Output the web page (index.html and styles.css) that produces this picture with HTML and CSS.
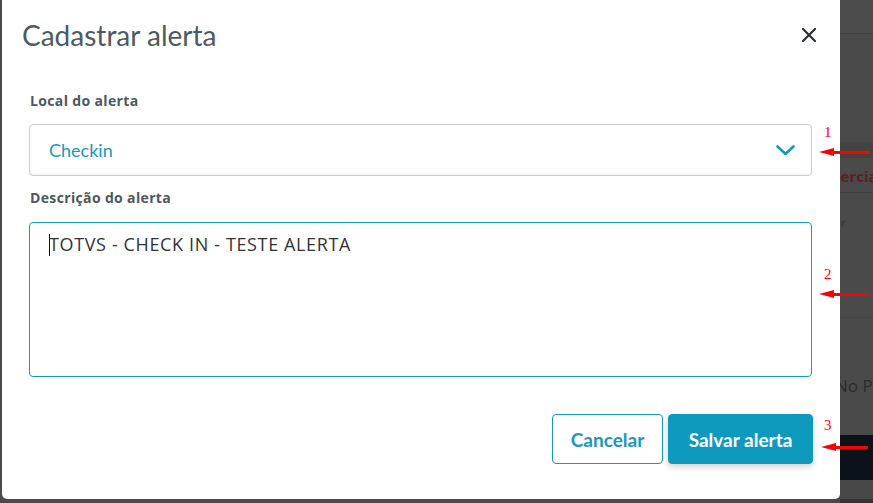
FILE: index.html
```html
<!DOCTYPE html>
<html lang="pt-BR">
<head>
<meta charset="utf-8">
<title>Cadastrar alerta</title>
<link rel="stylesheet" href="styles.css">
</head>
<body>
<div class="page">
  <div class="behind">
    <div class="row r-top"></div>
    <div class="row r-a"></div>
    <div class="row r-band"></div>
    <div class="row r-head"><span class="head-text">Comercial</span></div>
    <div class="row r-b"><span class="small-text">r</span></div>
    <div class="row r-c"><span class="np-text">No Pos</span></div>
    <div class="row r-navy"></div>
    <div class="row r-d"></div>
    <div class="row r-bottom"></div>
  </div>

  <div class="modal">
    <header class="modal-header">
      <h1 class="modal-title">Cadastrar alerta</h1>
      <button class="close-btn" aria-label="Fechar">
        <svg width="14" height="14" viewBox="0 0 14 14"><path d="M1 1L13 13M13 1L1 13" stroke="#2b2f33" stroke-width="2.2" stroke-linecap="round"/></svg>
      </button>
    </header>
    <div class="modal-body">
      <label class="field-label">Local do alerta</label>
      <div class="select">
        <span class="select-value">Checkin</span>
        <svg class="chevron" width="19" height="11" viewBox="0 0 19 11"><path d="M1.5 1.5L9.5 9L17.5 1.5" fill="none" stroke="#1798bd" stroke-width="2.6" stroke-linecap="round" stroke-linejoin="round"/></svg>
      </div>
      <label class="field-label label-desc">Descrição do alerta</label>
      <div class="textarea"><span class="caret"></span>TOTVS - CHECK IN - TESTE ALERTA</div>
    </div>
    <footer class="modal-footer">
      <button class="btn btn-outline">Cancelar</button>
      <button class="btn btn-primary">Salvar alerta</button>
    </footer>
  </div>

  <div class="note note-1"><span class="note-num">1</span><span class="arrow"></span></div>
  <div class="note note-2"><span class="note-num">2</span><span class="arrow"></span></div>
  <div class="note note-3"><span class="note-num">3</span><span class="arrow"></span></div>
</div>
</body>
</html>
```

FILE: styles.css
```css
* { box-sizing: border-box; }
html, body { margin: 0; padding: 0; }
body {
  width: 873px;
  height: 503px;
  overflow: hidden;
  background: #4a4a4a;
  font-family: Lato, "Open Sans", Arial, sans-serif;
}
.page {
  position: relative;
  width: 873px;
  height: 503px;
}

/* page behind the overlay */
.behind {
  display: flex;
  flex-direction: column;
  height: 503px;
  padding-left: 840px;
  background: #4a4a4a;
  overflow: hidden;
}
.row { flex: none; white-space: nowrap; overflow: hidden; }
.r-top { height: 34px; border-bottom: 1px solid #434343; background: #4b4b4b; }
.r-a { height: 108px; background: #4a4a4a; }
.r-band { height: 16px; background: #434343; }
.r-head { height: 35px; border-bottom: 1px solid #3e3e3e; background: #4a4a4a; padding-top: 8px; }
.head-text { display: inline-block; margin-left: -33px; font-family: "Open Sans", sans-serif; font-weight: 700; font-size: 15px; color: #5a1f1f; }
.r-b { height: 125px; border-bottom: 1px solid #434343; padding-top: 18px; }
.small-text { font-size: 12px; color: #3a3a3a; margin-left: 1px; }
.r-c { height: 117px; padding-top: 56px; }
.np-text { font-family: "Open Sans", sans-serif; font-size: 17px; color: #2c2c2c; margin-left: -5px; }
.r-navy { height: 45px; background: #0b1219; }
.r-d { height: 19px; background: #484848; }
.r-bottom { flex: 1; background: #333; }

/* modal */
.modal {
  position: absolute;
  left: 2px;
  top: -6px;
  width: 838px;
  height: 505px;
  background: #fff;
  border-radius: 5px;
  display: flex;
  flex-direction: column;
}
.modal-header {
  display: flex;
  align-items: center;
  justify-content: space-between;
  height: 91px;
  padding: 0 24px 9px 20px;
}
.modal-title {
  margin: 0;
  font-weight: 400;
  font-size: 28px;
  color: #4a5b63;
}
.close-btn {
  background: none;
  border: 0;
  padding: 0;
  width: 14px;
  height: 14px;
  display: flex;
}
.modal-body {
  display: flex;
  flex-direction: column;
  padding: 0 28px 0 27px;
}
.field-label {
  font-family: "Open Sans", sans-serif;
  font-weight: 700;
  font-size: 14px;
  letter-spacing: 0.35px;
  color: #4d585e;
  line-height: 18px;
  margin: 7px 0 0 1px;
}
.select {
  margin-top: 14px;
  height: 52px;
  border: 1px solid #c9cdd0;
  border-radius: 4px;
  box-shadow: inset 0 -1px 3px rgba(0,0,0,0.05);
  display: flex;
  align-items: center;
  justify-content: space-between;
  padding: 0 16px 0 19px;
}
.select-value {
  font-size: 18px;
  color: #1798bd;
}
.chevron { margin-top: 1px; }
.label-desc { margin-top: 13px; }
.textarea {
  margin-top: 15px;
  height: 155px;
  border: 1px solid #1798bd;
  border-radius: 4px;
  padding: 10px 19px;
  font-family: "Open Sans", sans-serif;
  font-size: 18px;
  letter-spacing: 0.63px;
  color: #333;
  line-height: 22px;
}
.caret {
  display: inline-block;
  width: 1px;
  height: 22px;
  background: #111;
  vertical-align: -5px;
  margin-right: -1px;
}
.modal-footer {
  display: flex;
  justify-content: flex-end;
  gap: 5px;
  padding: 37px 27px 0 0;
}
.btn {
  height: 50px;
  border-radius: 4px;
  font-family: Lato, "Open Sans", sans-serif;
  font-weight: 700;
  font-size: 19px;
  padding: 0;
}
.btn-outline {
  width: 111px;
  background: #fff;
  border: 1px solid #1798bd;
  color: #1798bd;
}
.btn-primary {
  width: 145px;
  background: #0e9abe;
  border: 1px solid #0e9abe;
  color: #fff;
  box-shadow: 0 3px 6px rgba(0,0,0,0.18);
}

/* red annotations over the screenshot */
.note {
  position: absolute;
  left: 818px;
  width: 52px;
  height: 34px;
}
.note-1 { top: 124px; }
.note-2 { top: 266px; }
.note-3 { top: 417px; }
.note-num {
  position: absolute;
  left: 6px;
  top: 0;
  font-family: "Liberation Serif", "DejaVu Serif", serif;
  font-size: 15px;
  line-height: 17px;
  color: #f00;
}
.arrow {
  position: absolute;
  left: 1px;
  top: 24px;
  width: 51px;
  height: 9px;
}
.arrow::before {
  content: "";
  position: absolute;
  left: 10px;
  right: 0;
  top: 3px;
  height: 3px;
  background: #f00;
}
.arrow::after {
  content: "";
  position: absolute;
  left: 0;
  top: 0;
  border-top: 4.5px solid transparent;
  border-bottom: 4.5px solid transparent;
  border-right: 15px solid #f00;
}
.note-3 .arrow { top: 26px; width: 47px; left: 3px; }
```
